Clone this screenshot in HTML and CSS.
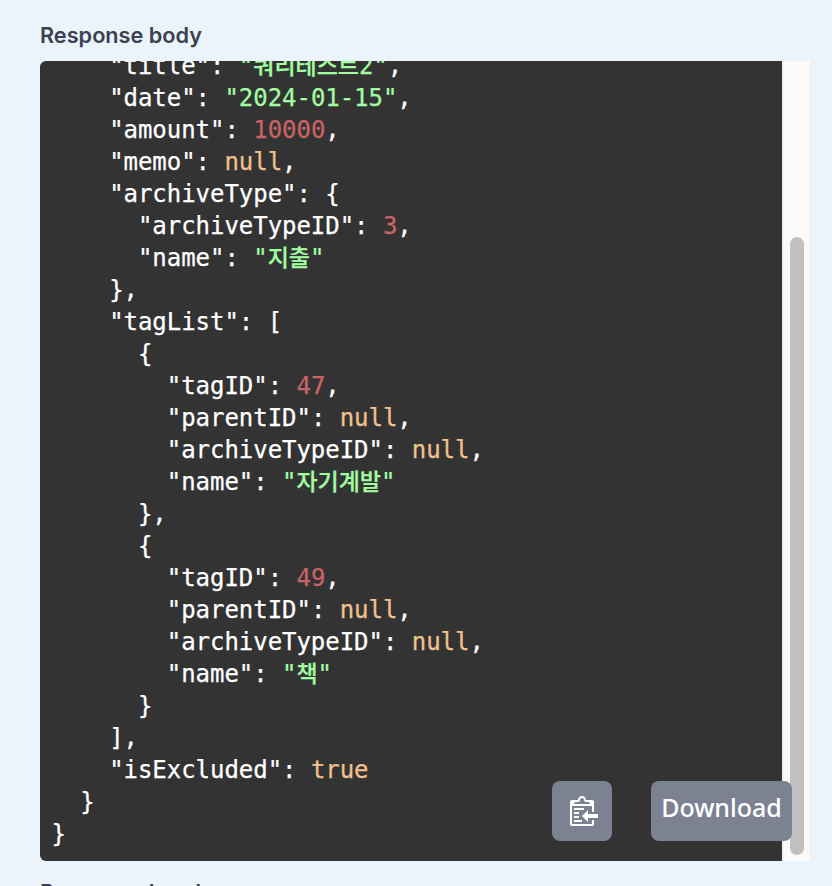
FILE: index.html
```html
<!DOCTYPE html>
<html lang="ko">
<head>
<meta charset="utf-8">
<title>Response body</title>
<link rel="stylesheet" href="styles.css">
</head>
<body>
<section class="response">
  <h5 class="label">Response body</h5>
  <div class="body-box">
    <div class="code-view">
<pre class="code"><span class="k">    "title"</span>: <span class="s">"<span class="h">쿼리테스트</span>2"</span>,
<span class="k">    "date"</span>: <span class="s">"2024-01-15"</span>,
<span class="k">    "amount"</span>: <span class="n">10000</span>,
<span class="k">    "memo"</span>: <span class="l">null</span>,
<span class="k">    "archiveType"</span>: {
<span class="k">      "archiveTypeID"</span>: <span class="n">3</span>,
<span class="k">      "name"</span>: <span class="s">"<span class="h">지출</span>"</span>
    },
<span class="k">    "tagList"</span>: [
      {
<span class="k">        "tagID"</span>: <span class="n">47</span>,
<span class="k">        "parentID"</span>: <span class="l">null</span>,
<span class="k">        "archiveTypeID"</span>: <span class="l">null</span>,
<span class="k">        "name"</span>: <span class="s">"<span class="h">자기계발</span>"</span>
      },
      {
<span class="k">        "tagID"</span>: <span class="n">49</span>,
<span class="k">        "parentID"</span>: <span class="l">null</span>,
<span class="k">        "archiveTypeID"</span>: <span class="l">null</span>,
<span class="k">        "name"</span>: <span class="s">"<span class="h">책</span>"</span>
      }
    ],
<span class="k">    "isExcluded"</span>: <span class="l">true</span>
  }
}</pre>
    </div>
    <div class="scrollbar"><div class="thumb"></div></div>
    <button class="btn btn-copy" type="button" aria-label="Copy">
      <svg class="copy-icon" viewBox="0 0 15 16" aria-hidden="true"><path fill-rule="evenodd" d="M2 13h4v1H2v-1zm5-6H2v1h5V7zm2 3V8l-3 3 3 3v-2h5v-2H9zM4.5 9H2v1h2.500V9zM2 12h2.500v-1H2v1zm9 1h1v2c-.02.28-.11.52-.3.7-.19.18-.42.28-.7.3H1c-.55 0-1-.45-1-1V4c0-.55.45-1 1-1h3c0-1.110.89-2 2-2 1.110 0 2 .89 2 2h3c.55 0 1 .45 1 1v5h-1V6H1v9h10v-2zM2 5h8c0-.55-.45-1-1-1H8c-.55 0-1-.45-1-1s-.45-1-1-1-1 .45-1 1-.45 1-1 1H3c-.55 0-1 .45-1 1z"/></svg>
    </button>
    <button class="btn btn-download" type="button">Download</button>
  </div>
  <h5 class="label label-next">Response headers</h5>
</section>
</body>
</html>
```

FILE: styles.css
```css
html, body {
  margin: 0;
  height: 100%;
  overflow: hidden;
  background: #ebf3fb;
}

.response {
  padding: 20px 20px 0 40px;
  font-family: Inter, "Noto Sans CJK KR", sans-serif;
}

.label {
  margin: 0;
  height: 41px;
  font-size: 21.7px;
  line-height: 30px;
  font-weight: 600;
  color: #3b4151;
}

.label-next {
  margin-top: 16px;
}

.body-box {
  position: relative;
  display: flex;
  height: 800px;
}

.code-view {
  flex: 1;
  overflow: hidden;
  background: #333333;
  border-radius: 6px 0 0 6px;
}

.code {
  margin: -11px 0 0;
  padding: 0 0 0 11.5px;
  font-family: "DejaVu Sans Mono", "Noto Sans CJK KR", monospace;
  font-size: 24px;
  line-height: 32px;
  letter-spacing: -0.04px;
  color: #ffffff;
  -webkit-text-stroke: 0.25px;
}

.s { color: #a2fca2; }
.n { color: #c96464; }
.l { color: #f2c08c; }

.h {
  font-size: 23px;
  line-height: 1;
  font-weight: 500;
}

.scrollbar {
  box-sizing: border-box;
  width: 30px;
  padding: 0 6px 6px;
  display: flex;
  flex-direction: column;
  justify-content: flex-end;
  background: #fafafa;
  border-left: 2px solid #f0f0f0;
  border-right: 2px solid #f0f0f0;
}

.thumb {
  height: 618px;
  border-radius: 8px;
  background: #c1c1c1;
}

.btn {
  position: absolute;
  top: 720px;
  height: 60px;
  border: 0;
  border-radius: 8px;
  background: #7d8293;
  color: #ffffff;
  padding: 0;
}

.btn-copy {
  left: 512px;
  width: 60px;
  padding: 0 0 2px 6px;
  display: flex;
  align-items: center;
  justify-content: center;
}

.copy-icon {
  width: 30px;
  height: 32px;
  fill: #ffffff;
}

.btn-download {
  left: 611px;
  width: 141px;
  font-family: "Noto Sans", sans-serif;
  font-size: 25px;
  line-height: 52px;
  padding-bottom: 8px;
  font-weight: 500;
}
```
